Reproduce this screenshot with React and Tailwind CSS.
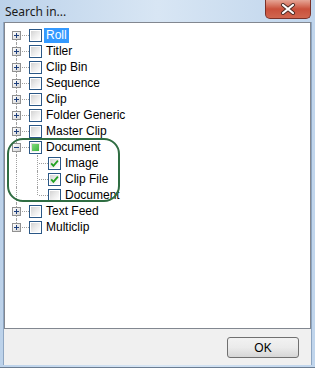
import React from 'react';

const rows = [
  { label: 'Roll', level: 0, exp: '+', check: 'none', selected: true, first: true },
  { label: 'Titler', level: 0, exp: '+', check: 'none' },
  { label: 'Clip Bin', level: 0, exp: '+', check: 'none' },
  { label: 'Sequence', level: 0, exp: '+', check: 'none' },
  { label: 'Clip', level: 0, exp: '+', check: 'none' },
  { label: 'Folder Generic', level: 0, exp: '+', check: 'none' },
  { label: 'Master Clip', level: 0, exp: '+', check: 'none' },
  { label: 'Document', level: 0, exp: '-', check: 'partial' },
  { label: 'Image', level: 1, check: 'checked' },
  { label: 'Clip File', level: 1, check: 'checked' },
  { label: 'Document', level: 1, check: 'none', lastChild: true },
  { label: 'Text Feed', level: 0, exp: '+', check: 'none' },
  { label: 'Multiclip', level: 0, exp: '+', check: 'none', last: true },
];

// small +/- box used by the tree
function Expander({ sign }) {
  return (
    <div className="absolute left-[7px] top-[4px] w-[9px] h-[9px] border border-[#919191] bg-gradient-to-br from-white to-[#d4d4d4] flex items-center justify-center">
      <div className="relative w-[5px] h-[5px]">
        <div className="absolute left-0 top-[2px] w-[5px] h-[1px] bg-[#1e3f7c]" />
        {sign === '+' && <div className="absolute left-[2px] top-0 w-[1px] h-[5px] bg-[#1e3f7c]" />}
      </div>
    </div>
  );
}

function CheckBox({ state }) {
  return (
    <div className="w-[13px] h-[13px] shrink-0 border border-[#2a5786] bg-white p-[1px]">
      <div className="w-full h-full bg-gradient-to-br from-[#d3d3d3] via-[#ebebeb] to-white flex items-center justify-center">
        {state === 'checked' && (
          <svg width="9" height="9" viewBox="0 0 9 9">
            <path d="M1.2 4.4 L3.4 6.8 L7.9 1.6" fill="none" stroke="#21a121" strokeWidth="1.8" />
          </svg>
        )}
        {state === 'partial' && (
          <div className="w-[7px] h-[7px] bg-gradient-to-br from-[#7fd97f] to-[#3cb43c]" />
        )}
      </div>
    </div>
  );
}

function TreeRow({ row }) {
  return (
    <div className="flex items-center h-4">
      {/* main connector column */}
      <div className="relative w-[24px] h-full shrink-0">
        <div
          className={`absolute left-[11px] border-l border-dotted border-[#a0a0a0] ${row.first ? 'top-[8px]' : 'top-0'} ${row.last ? 'h-[8px]' : 'bottom-0'}`}
        />
        {row.level === 0 && (
          <>
            <div className="absolute left-[13px] top-[8px] w-[11px] border-t border-dotted border-[#a0a0a0]" />
            <Expander sign={row.exp} />
          </>
        )}
      </div>
      {row.level === 1 && (
        <div className="relative w-[19px] h-full shrink-0">
          <div className={`absolute left-[8px] top-0 border-l border-dotted border-[#a0a0a0] ${row.lastChild ? 'h-[8px]' : 'bottom-0'}`} />
          <div className="absolute left-[10px] top-[8px] w-[9px] border-t border-dotted border-[#a0a0a0]" />
        </div>
      )}
      <CheckBox state={row.check} />
      <span
        className={`ml-[2px] px-[2px] h-[15px] leading-[15px] text-[12px] ${row.selected ? 'bg-[#3399ff] text-white' : 'text-black'}`}
      >
        {row.label}
      </span>
    </div>
  );
}

export default function App() {
  return (
    <div
      className="w-[315px] h-[368px] flex flex-col bg-gradient-to-r from-[#bcd2ea] via-[#d8e6f4] to-[#c0d5ec] border-b border-[#6b7d92]"
      style={{ fontFamily: '"Liberation Sans", Arial, sans-serif' }}
    >
      {/* title bar */}
      <div className="h-[22px] flex items-start justify-between shrink-0">
        <span className="pl-[5px] pt-[3px] text-[12px] text-[#1a1a1a]" style={{ fontFamily: '"Noto Sans", "Open Sans", sans-serif' }}>
          Search in...
        </span>
        <div className="mr-[4px] w-[46px] h-[19px] rounded-b-[5px] border border-t-0 border-[#7a3128] bg-gradient-to-b from-[#e5a596] via-[#c9503b] to-[#d0664f] flex items-center justify-center">
          <svg width="16" height="12" viewBox="0 0 16 12">
            <path d="M3 2 L13 10 M13 2 L3 10" stroke="#4a2a24" strokeWidth="4" strokeLinecap="round" />
            <path d="M3 2 L13 10 M13 2 L3 10" stroke="#ffffff" strokeWidth="2.2" strokeLinecap="round" />
          </svg>
        </div>
      </div>

      {/* client area */}
      <div className="flex-1 mx-[3px] mb-[2px] flex flex-col bg-[#f0f0f0] border-l border-r border-[#8ea6c2]">
        <div className="relative h-[307px] bg-white border border-[#828790] pt-[4px]">
          {rows.map((row, i) => (
            <TreeRow key={i} row={row} />
          ))}
          {/* green highlight around Document group */}
          <div className="absolute left-[2px] top-[115px] w-[113px] h-[64px] rounded-[16px] border-2 border-[#2f6d42] pointer-events-none" />
        </div>
        <div className="flex-1 flex justify-end items-start pt-[8px] pr-[12px]">
          <button className="w-[72px] h-[21px] rounded-[3px] border border-[#707070] bg-gradient-to-b from-[#f2f2f2] via-[#ebebeb] to-[#d6d6d6] text-[12px] text-black">
            OK
          </button>
        </div>
      </div>
    </div>
  );
}
